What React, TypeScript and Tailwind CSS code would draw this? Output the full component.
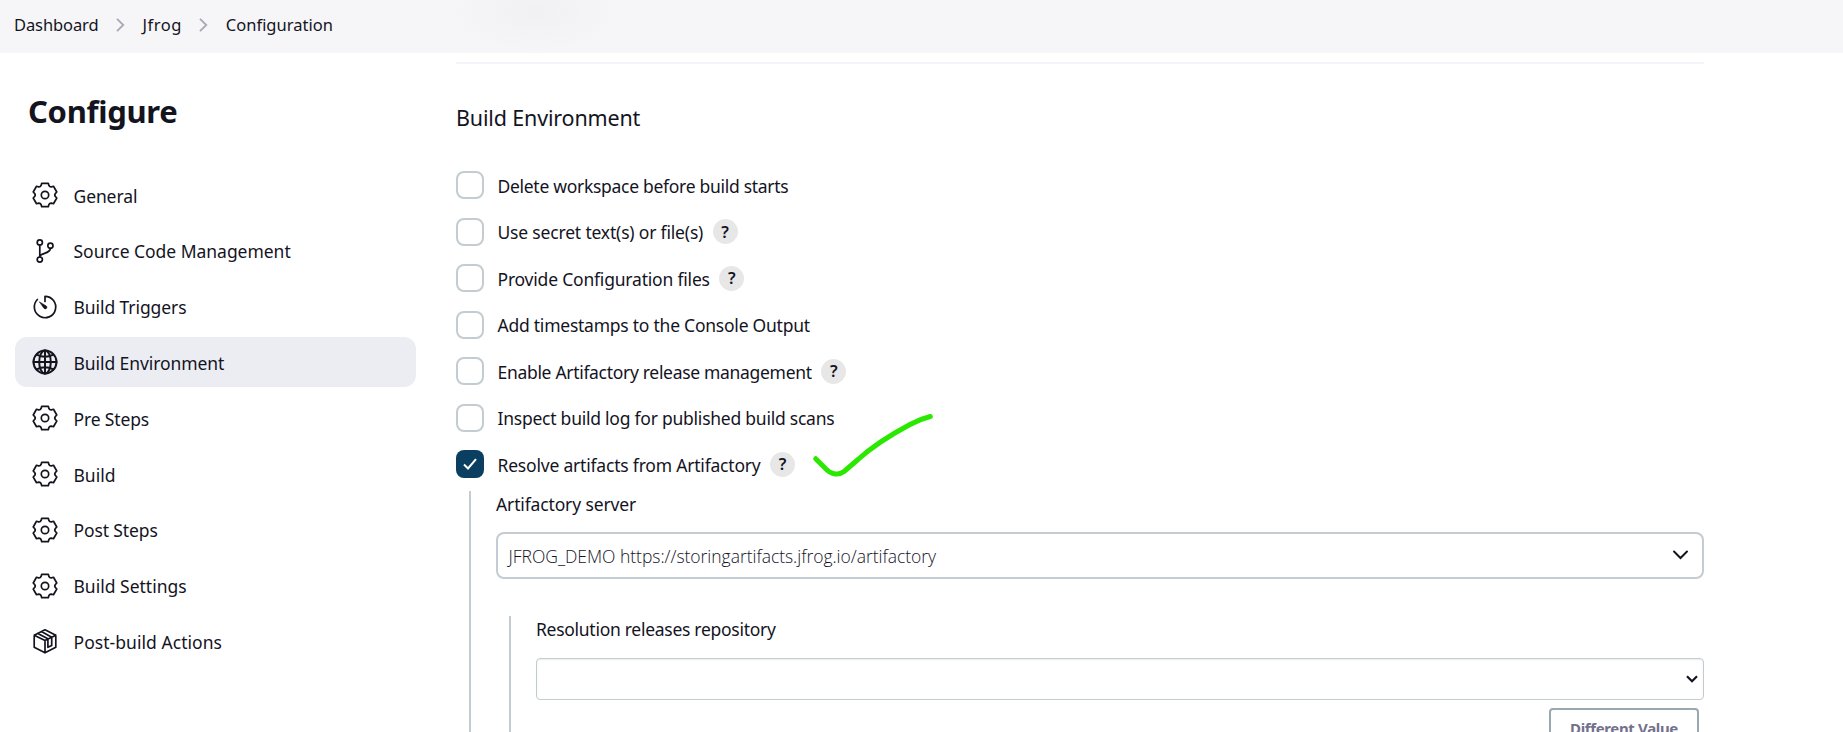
import type { ReactNode } from "react";

const tooth = [
  [-4.8, -8.5],
  [-3.9, -9.6],
  [-3.3, -11.7],
  [3.3, -11.7],
  [3.9, -9.6],
  [4.8, -8.5],
];
const cogPath =
  [0, 60, 120, 180, 240, 300]
    .map((deg, i) => {
      const a = (deg * Math.PI) / 180;
      return tooth
        .map(([x, y], j) => {
          const px = (x * Math.cos(a) - y * Math.sin(a)).toFixed(2);
          const py = (x * Math.sin(a) + y * Math.cos(a)).toFixed(2);
          return `${i === 0 && j === 0 ? "M" : "L"}${px} ${py}`;
        })
        .join("");
    })
    .join("") + "Z";

function Icon({ children }: { children: ReactNode }) {
  return (
    <svg
      viewBox="-13 -13 26 26"
      className="size-[26px] shrink-0"
      fill="none"
      stroke="currentColor"
      strokeWidth="1.7"
      strokeLinecap="round"
      strokeLinejoin="round"
    >
      {children}
    </svg>
  );
}

const Cog = () => (
  <Icon>
    <path d={cogPath} />
    <circle r="3.7" />
  </Icon>
);

const Branch = () => (
  <Icon>
    <circle cx="-5.2" cy="-8.6" r="2.6" />
    <circle cx="-5.2" cy="8.6" r="2.6" />
    <circle cx="5.4" cy="-5.2" r="2.6" />
    <path d="M-5.2-6V6M5.4-2.6C5.2 3.4-5.2 1.4-5.2 6" />
  </Icon>
);

const Timer = () => (
  <Icon>
    <path d="M0-5.5V-10.7A10.7 10.7 0 1 1-7.6-7.5" />
    <path d="M-5.4-5 1.4-.9A1.5 1.5 0 0 1-.9 1.4Z" fill="currentColor" strokeWidth=".6" />
  </Icon>
);

const Globe = () => (
  <Icon>
    <g strokeWidth="2">
      <circle r="11.5" />
      <ellipse rx="5.8" ry="11.5" />
      <path d="M0-11.5V11.5M-11.5 0H11.5M-8.4-7.4Q0-3.2 8.4-7.4M-8.4 7.4Q0 3.2 8.4 7.4" />
    </g>
  </Icon>
);

const Package = () => (
  <Icon>
    <path d="M0-11.2 10.8-5.8V6.2L0 11.8-10.8 6.2V-5.8ZM-10.8-5.8 0-.4 10.8-5.8M0-.4V11.8M-7.2-7.6 2.9-2.2V6.3L6.7 4.4V-3.8L-3.6-9.4" />
  </Icon>
);

const nav = [
  { label: "General", icon: Cog, track: "tracking-[-0.1px]" },
  { label: "Source Code Management", icon: Branch, track: "tracking-[-0.03px]" },
  { label: "Build Triggers", icon: Timer, track: "tracking-[-0.08px]" },
  { label: "Build Environment", icon: Globe, track: "tracking-[-0.08px]", active: true },
  { label: "Pre Steps", icon: Cog, track: "tracking-[-0.15px]" },
  { label: "Build", icon: Cog, track: "" },
  { label: "Post Steps", icon: Cog, track: "tracking-[-0.12px]" },
  { label: "Build Settings", icon: Cog, track: "" },
  { label: "Post-build Actions", icon: Package, track: "tracking-[0.05px]" },
];

const options = [
  { label: "Delete workspace before build starts", track: "tracking-[-0.29px]" },
  { label: "Use secret text(s) or file(s)", track: "tracking-[-0.18px]", help: true },
  { label: "Provide Configuration files", track: "tracking-[-0.2px]", help: true },
  { label: "Add timestamps to the Console Output", track: "tracking-[-0.24px]" },
  { label: "Enable Artifactory release management", track: "tracking-[-0.31px]", help: true },
  { label: "Inspect build log for published build scans", track: "tracking-[-0.24px]" },
  { label: "Resolve artifacts from Artifactory", track: "tracking-[-0.2px]", help: true, checked: true },
];

function Separator() {
  return (
    <svg viewBox="0 0 9 14" className="mx-[17px] h-[14px] w-[9px]" fill="none" stroke="#a9a8b8" strokeWidth="1.8">
      <path d="M1 .8 7.3 7 1 13.2" />
    </svg>
  );
}

export default function App() {
  return (
    <div className="relative h-[732px] w-full overflow-hidden bg-white font-['Noto_Sans',sans-serif] text-[#14141f]">
      <header className="flex h-[53px] items-center bg-[#f6f6f8] bg-[radial-gradient(ellipse_90px_42px_at_535px_12px,#f1f1f3,#f6f6f8)] pb-[3px] pl-[14px] text-[16.5px]">
        <span className="tracking-[-0.1px]">Dashboard</span>
        <Separator />
        <span className="pl-px tracking-[0.5px]">Jfrog</span>
        <Separator />
        <span className="pl-px">Configuration</span>
      </header>
      <div className="flex">
        <aside className="w-[456px] shrink-0 pl-[15px]">
          <h1 className="mt-[34px] flex h-12 items-center pl-[13px] text-[31px] font-bold tracking-[-0.3px]">Configure</h1>
          <nav className="mt-[35px] flex w-[401px] flex-col gap-[5.8px]">
            {nav.map(({ label, icon: NavIcon, track, active }) => (
              <a
                key={label}
                className={`flex h-[50px] items-center gap-[15.5px] rounded-xl pl-[17px] text-[17.5px] ${active ? "bg-[#ecedf3]" : ""}`}
              >
                <NavIcon />
                <span className={`pt-[1.5px] ${track}`}>{label}</span>
              </a>
            ))}
          </nav>
        </aside>
        <main className="w-[1248px] shrink-0 pt-[9px]">
          <div className="h-0.5 bg-[#f3f3f8]" />
          <h2 className="mt-[36px] text-[21.5px] leading-9 tracking-[-0.16px]">Build Environment</h2>
          <div className="mt-[26px] flex flex-col">
            {options.map((o) => (
              <label key={o.label} className="flex h-[46.5px] items-center text-[17.5px]">
                <span
                  className={`mr-[13.5px] flex size-7 items-center justify-center rounded-lg ${o.checked ? "bg-[#0b3f61]" : "border-2 border-[#c3ccd1]"}`}
                >
                  {o.checked && (
                    <svg viewBox="0 0 14 12" className="h-3 w-3.5" fill="none" stroke="white" strokeWidth="2">
                      <path d="M1 6.5 5 10.5 13 1.2" />
                    </svg>
                  )}
                </span>
                <span className={`pt-px ${o.track}`}>{o.label}</span>
                {o.help && (
                  <span className="ml-[9.5px] flex size-[25px] items-center justify-center rounded-full bg-[#e7e7e8] text-[16.5px] leading-none font-semibold">
                    ?
                  </span>
                )}
              </label>
            ))}
          </div>
          <div className="mt-[3px] ml-[13px] h-[300px] border-l-2 border-[#c3ccd1] pl-[25px]">
            <div className="h-[27px] text-[17.5px] leading-[27px] tracking-[-0.14px]">Artifactory server</div>
            <div className="mt-[14px] flex h-[47px] items-center justify-between rounded-lg border-2 border-[#c3ccd1] pr-[13px] pl-[10.5px] font-['Open_Sans',sans-serif] text-[17.5px] font-light">
              <span className="pt-0.5 tracking-[-0.03px]">JFROG_DEMO https://storingartifacts.jfrog.io/artifactory</span>
              <svg viewBox="0 0 17 10" className="h-2.5 w-[17px]" fill="none" stroke="currentColor" strokeWidth="2" strokeLinecap="round">
                <path d="M2 1.5 8.5 8 15 1.5" />
              </svg>
            </div>
            <div className="mt-[37px] ml-[13px] h-[200px] border-l-2 border-[#c3ccd1] pl-[25px]">
              <div className="h-[27px] text-[17.5px] leading-[27px] tracking-[-0.28px]">Resolution releases repository</div>
              <div className="mt-[15px] flex h-[42px] items-center justify-end rounded border border-[#c3ccd1] pr-[5px] shadow-[inset_0_1px_2px_rgba(0,0,0,0.08)]">
                <svg viewBox="0 0 12 8" className="h-2 w-3" fill="none" stroke="currentColor" strokeWidth="2.2">
                  <path d="M1 1.2 6 6.2 11 1.2" />
                </svg>
              </div>
              <div className="mt-2 mr-[5px] flex justify-end">
                <button className="h-[42px] w-[150px] rounded border-2 border-[#9aa8b2] text-[15px] font-bold tracking-[-0.35px] text-[#73718c]">
                  Different Value
                </button>
              </div>
            </div>
          </div>
        </main>
      </div>
      <svg
        viewBox="0 0 126 70"
        className="absolute top-[410px] left-[810px] h-[70px] w-[126px]"
        fill="none"
        stroke="#2ae800"
        strokeWidth="5"
        strokeLinecap="round"
        strokeLinejoin="round"
      >
        <path d="M5.7 48.7 15 58C20 64 28 66 34 61.5L48 49.5C64 35 84 23 100 14.5Q110 9 120.3 6.5" />
      </svg>
    </div>
  );
}
